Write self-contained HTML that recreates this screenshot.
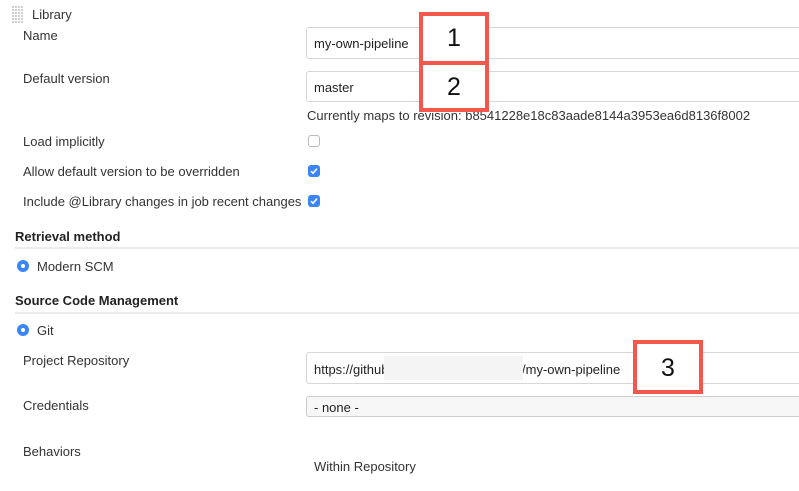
<!DOCTYPE html>
<html><head><style>
body{margin:0;width:799px;height:491px;background:#fff;font-family:"Liberation Sans",Arial,sans-serif;color:#333;position:relative;overflow:hidden;font-size:13px}
.a{position:absolute;white-space:nowrap}
.inp{position:absolute;left:306px;width:510px;border:1px solid #d6d6d6;border-radius:3px;background:#fff;box-sizing:border-box}
.inp span{position:absolute;left:7px;color:#222;font-size:13px}
.red{position:absolute;border:4px solid #f4574b;background:#fff;box-sizing:border-box;font-size:25px;color:#111;text-align:center}
.cb{position:absolute;left:308px;width:12px;height:12px;border-radius:3px;box-sizing:border-box}
.on{background:#3b86f7}
.off{border:1px solid #bbb}
.rad{position:absolute;left:17px;width:12px;height:12px;border-radius:50%;background:#3b86f7}
.rad:after{content:"";position:absolute;left:4px;top:4px;width:4px;height:4px;border-radius:50%;background:#fff}
.hr{position:absolute;left:15px;right:0;height:2px;background:#ececec}
b{font-weight:bold;color:#222}
</style></head><body>
<svg class="a" style="left:12px;top:6px" width="12" height="18"><g fill="#ccc">
<rect x="0" y="0" width="12" height="18" fill="none"/>
</g><pattern id="p" width="3" height="3" patternUnits="userSpaceOnUse"><rect width="2" height="2" fill="#cfcfcf"/></pattern><rect width="12" height="18" fill="url(#p)"/></svg>
<div class="a" style="left:32px;top:7px">Library</div>
<div class="a" style="left:23px;top:28px">Name</div>
<div class="inp" style="top:27px;height:32px"><span style="top:8px">my-own-pipeline</span></div>
<div class="a" style="left:23px;top:71px">Default version</div>
<div class="inp" style="top:71px;height:31px"><span style="top:8px">master</span></div>
<div class="a" style="left:307px;top:108px">Currently maps to revision: b8541228e18c83aade8144a3953ea6d8136f8002</div>
<div class="red" style="left:419px;top:12px;width:70px;height:53px;line-height:45px">1</div>
<div class="red" style="left:419px;top:61px;width:70px;height:51px;line-height:45px">2</div>
<div class="a" style="left:23px;top:134px">Load implicitly</div>
<div class="cb off" style="top:135px"></div>
<div class="a" style="left:23px;top:164px">Allow default version to be overridden</div>
<div class="cb on" style="top:165px"><svg width="12" height="12"><path d="M3 6.2l2 2 4-4.5" stroke="#fff" stroke-width="1.6" fill="none"/></svg></div>
<div class="a" style="left:23px;top:194px">Include @Library changes in job recent changes</div>
<div class="cb on" style="top:195px"><svg width="12" height="12"><path d="M3 6.2l2 2 4-4.5" stroke="#fff" stroke-width="1.6" fill="none"/></svg></div>
<div class="a" style="left:15px;top:229px"><b>Retrieval method</b></div>
<div class="hr" style="top:247px"></div>
<div class="rad" style="top:260px"></div>
<div class="a" style="left:37px;top:259px">Modern SCM</div>
<div class="a" style="left:15px;top:293px"><b>Source Code Management</b></div>
<div class="hr" style="top:312px"></div>
<div class="rad" style="top:324px"></div>
<div class="a" style="left:37px;top:323px">Git</div>
<div class="a" style="left:23px;top:353px">Project Repository</div>
<div class="inp" style="top:352px;height:32px"><span style="top:9px">https://github</span><span style="left:215px;top:9px">/my-own-pipeline</span></div>
<div class="a" style="left:384px;top:356px;width:139px;height:24px;background:#f4f4f4"></div>
<div class="red" style="left:633px;top:340px;width:70px;height:54px;line-height:48px">3</div>
<div class="a" style="left:23px;top:398px">Credentials</div>
<div class="inp" style="top:396px;height:21px;background:#f7f7f7;border-color:#ccc"><span style="top:3px">- none -</span></div>
<div class="a" style="left:23px;top:444px">Behaviors</div>
<div class="a" style="left:314px;top:459px">Within Repository</div>
</body></html>
